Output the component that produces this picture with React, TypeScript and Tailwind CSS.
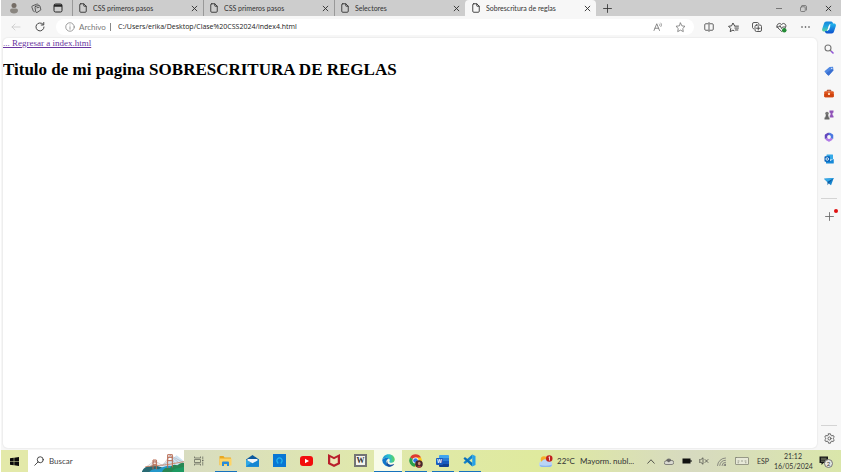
import React from "react";

type IconProps = { className?: string };

const line = {
  fill: "none",
  stroke: "currentColor",
  strokeLinecap: "round" as const,
  strokeLinejoin: "round" as const,
};

function PageIcon({ className = "" }: IconProps) {
  return (
    <svg viewBox="0 0 16 20" className={`h-[10px] w-2 shrink-0 ${className}`} {...line} strokeWidth="1.8">
      <path d="M3.5 1.5h6L14.500 6.500v10a2 2 0 0 1-2 2h-9a2 2 0 0 1-2-2v-13a2 2 0 0 1 2-2z" />
      <path d="M9.500 1.800V5.500a1 1 0 0 0 1 1h3.800" />
    </svg>
  );
}

function CloseIcon({ className = "" }: IconProps) {
  return (
    <svg viewBox="0 0 12 12" className={`h-[7px] w-[7px] ${className}`} {...line} strokeWidth="1.6">
      <path d="M2 2l8 8M10 2l-8 8" />
    </svg>
  );
}

function PlusIcon({ className = "" }: IconProps) {
  return (
    <svg viewBox="0 0 16 16" className={`h-[9px] w-[9px] ${className}`} {...line} strokeWidth="1.5">
      <path d="M8 1v14M1 8h14" />
    </svg>
  );
}

function ProfileIcon() {
  return (
    <svg viewBox="0 0 20 24" className="h-3 w-[10px]">
      <circle cx="10" cy="7" r="5" fill="#756d66" />
      <path d="M2 17a4 4 0 0 1 4-4h8a4 4 0 0 1 4 4c0 4-3.500 6-8 6s-8-2-8-6z" fill="#8a8680" />
    </svg>
  );
}

function WorkspacesIcon() {
  return (
    <svg viewBox="0 0 22 22" className="h-[11px] w-[11px]" {...line} strokeWidth="1.500">
      <path d="M9.500 6.500l6-1.500a2 2 0 0 1 2.500 1.500l1.500 6a2 2 0 0 1-1.500 2.500l-6 4a2 2 0 0 1-2.500-1.500L8 9a2 2 0 0 1 1.500-2.500z" />
      <path d="M6.500 17.500A3 3 0 0 1 4.500 16L2 9a2.500 2.500 0 0 1 1.500-3.500L11 2.500a3 3 0 0 1 3.500.5" />
      <path d="M12 9.500l4-1" />
    </svg>
  );
}

function TabActionsIcon() {
  return (
    <svg viewBox="0 0 20 20" className="h-[10px] w-[10px] text-[#262626]">
      <rect x="2" y="2" width="16" height="16" rx="3" fill="none" stroke="currentColor" strokeWidth="2" />
      <path d="M2 3h16v4.500H2z" fill="currentColor" />
    </svg>
  );
}

function StarIcon() {
  return (
    <svg viewBox="0 0 20 20" className="h-[11px] w-[11px]" {...line} strokeWidth="1.500">
      <path d="M10 1.800l2.500 5.200 5.700.8-4.100 4 1 5.700-5.100-2.700-5.100 2.700 1-5.700-4.100-4 5.700-.8z" />
    </svg>
  );
}

function ReadAloudIcon() {
  return (
    <svg viewBox="0 0 22 20" className="h-[10px] w-[11px]" {...line} strokeWidth="1.700">
      <path d="M2 17L7.500 3.500 13 17M4 12.500h7" />
      <path d="M13 4c1.200 1 1.200 2.500 0 3.500M15.500 2c2.200 2 2.200 5.500 0 7.500" strokeWidth="1.300" />
    </svg>
  );
}

function SplitIcon() {
  return (
    <svg viewBox="0 0 20 20" className="h-[10px] w-[10px]" {...line} strokeWidth="1.600">
      <path d="M8 3.500H3.500a2 2 0 0 0-2 2v9a2 2 0 0 0 2 2H8M12 3.500h4.500a2 2 0 0 1 2 2v9a2 2 0 0 1-2 2H12M10 1v18" />
    </svg>
  );
}

function FavoritesIcon() {
  return (
    <svg viewBox="0 0 20 20" className="h-[11px] w-[11px]" {...line} strokeWidth="1.700">
      <path d="M12 7L9 1.800 6.500 7 1 7.800l4 4-1 5.700 5-2.700 2 1M12.500 7.500H19M12.500 11H19M13.500 14.500H18" />
    </svg>
  );
}

function CollectionsIcon() {
  return (
    <svg viewBox="0 0 20 20" className="h-[10px] w-[10px]" {...line} strokeWidth="1.700">
      <rect x="6" y="6" width="13" height="13" rx="3" />
      <path d="M3 13.500A3 3 0 0 1 1 11V4a3 3 0 0 1 3-3h7a3 3 0 0 1 2.500 2M12.500 9v7M9 12.500h7" />
    </svg>
  );
}

function EssentialsIcon() {
  return (
    <svg viewBox="0 0 22 22" className="h-[11px] w-[11px]">
      <g {...line} strokeWidth="1.700">
        <path d="M11 18.500L3 11A5 5 0 0 1 10 4l1 1 1-1a5 5 0 0 1 7 7z" />
        <path d="M1 10h5l2-3 3 6 2-3h5" />
      </g>
      <circle cx="16.500" cy="16.500" r="4.500" fill="#258b37" />
    </svg>
  );
}

function DotsIcon() {
  return (
    <svg viewBox="0 0 18 4" className="h-[2px] w-[9px]" fill="currentColor">
      <circle cx="2" cy="2" r="1.600" />
      <circle cx="9" cy="2" r="1.600" />
      <circle cx="16" cy="2" r="1.600" />
    </svg>
  );
}

function CopilotIcon() {
  return (
    <svg viewBox="0 0 28 26" className="h-[13px] w-[14px]">
      <defs>
        <linearGradient id="cpA" x1="0" y1="0" x2="0" y2="1">
          <stop offset="0" stopColor="#1684dc" />
          <stop offset=".5" stopColor="#20a8e0" />
          <stop offset="1" stopColor="#5fd09a" />
        </linearGradient>
        <linearGradient id="cpB" x1="0" y1="0" x2="0" y2="1">
          <stop offset="0" stopColor="#23b8ee" />
          <stop offset="1" stopColor="#0b4fcc" />
        </linearGradient>
      </defs>
      <path d="M9 1h9c3 0 3.500 2 4.500 5h-5c-2 0-3 1-3.600 3l-3 9c-.8 2-1.600 3-3.900 3H4c-3 0-4.500-2-3.500-5.500L4 5c.8-2.500 2-4 5-4z" fill="url(#cpA)" />
      <path d="M19 25h-9c-3 0-3.500-2-4.500-5h4c2 0 3-1 3.600-3l3-9c.8-2 1.600-3 3.900-3h4c3 0 4.500 2 3.500 5.500L24 21c-.8 2.500-2 4-5 4z" fill="url(#cpB)" />
      <path d="M14 9h3l-3 9h-3z" fill="#f2fbff" />
    </svg>
  );
}

function SideSearchIcon() {
  return (
    <svg viewBox="0 0 20 20" className="h-[10px] w-[10px]" fill="none" strokeLinecap="round">
      <circle cx="8" cy="8" r="6" stroke="#777" strokeWidth="2.200" />
      <path d="M12.500 12.500l2 2" stroke="#777" strokeWidth="2.200" />
      <path d="M15 15l3 3" stroke="#9254d8" strokeWidth="3.200" />
    </svg>
  );
}

function TagIcon() {
  return (
    <svg viewBox="0 0 20 20" className="h-[10px] w-[10px]">
      <path d="M11 2l7-.5 1 7L10 18.500a1.500 1.500 0 0 1-2 0L1.500 12a1.500 1.500 0 0 1 0-2z" fill="#4f88e2" />
      <path d="M19 8.500L10 18.500a1.500 1.500 0 0 1-2 0L4 14.500 16 6z" fill="#3a6fd0" />
      <circle cx="15.500" cy="5" r="1.300" fill="#dbe8ff" />
    </svg>
  );
}

function ToolboxIcon() {
  return (
    <svg viewBox="0 0 20 18" className="h-[9px] w-[10px]">
      <path d="M6.500 5V2.500h7V5" fill="none" stroke="#9a3412" strokeWidth="2" />
      <rect x="0.500" y="4.500" width="19" height="12" rx="2" fill="#e0561f" />
      <path d="M.5 9.500h19v5a2 2 0 0 1-2 2h-15a2 2 0 0 1-2-2z" fill="#cf440f" />
      <rect x="8" y="7.500" width="4" height="4.500" rx="1" fill="#ffd9b8" />
    </svg>
  );
}

function GamesIcon() {
  return (
    <svg viewBox="0 0 20 20" className="h-[10px] w-[10px]">
      <circle cx="6" cy="7" r="3.500" fill="#777" />
      <path d="M4 9h4l1.500 6H11v4H1v-4h1.500z" fill="#666" />
      <path d="M11 1h8v4l-2 1v4l2 2v3h-6.500L11 12l2-2V6l-2-1z" fill="#9053b8" />
    </svg>
  );
}

function M365Icon() {
  return (
    <svg viewBox="0 0 20 20" className="h-[10px] w-[10px]" fill="none" strokeWidth="5" strokeLinejoin="round">
      <path d="M4 13.500v-7L10 3" stroke="#6146bd" />
      <path d="M10 3l6 3.500v7" stroke="#4a78e0" />
      <path d="M16 13.500L10 17l-6-3.500" stroke="#b07ae6" />
    </svg>
  );
}

function OutlookIcon() {
  return (
    <svg viewBox="0 0 20 20" className="h-[10px] w-[10px]">
      <rect x="5" y="1" width="13" height="10" rx="1" fill="#35a9e8" />
      <path d="M4 10l8 4 7.500-4v8a1 1 0 0 1-1 1H5a1 1 0 0 1-1-1z" fill="#1789d8" />
      <rect x="1" y="4.500" width="11" height="11" rx="1.500" fill="#0763ba" />
      <circle cx="6.500" cy="10" r="2.600" fill="none" stroke="#fff" strokeWidth="1.700" />
    </svg>
  );
}

function DropIcon() {
  return (
    <svg viewBox="0 0 20 18" className="h-[9px] w-[10px]">
      <path d="M0 3.500L19.500 2 14 16.500l-5-4z" fill="#1583ce" />
      <path d="M19.500 2L7 9.500v7l2.500-4z" fill="#0b5a9e" />
      <path d="M0 3.500L19.500 2 7 9.500z" fill="#34a8e6" />
    </svg>
  );
}

function GearIcon() {
  return (
    <svg viewBox="0 0 20 20" className="h-[11px] w-[11px]" {...line} strokeWidth="1.600">
      <path d="M8.200 1.500h3.600l.6 2.600 1.900 1.100 2.500-.8 1.800 3.200-1.900 1.800v1.200l1.900 1.800-1.800 3.200-2.500-.8-1.900 1.100-.6 2.600H8.200l-.6-2.600-1.900-1.100-2.500.8-1.800-3.200 1.900-1.800V9.400L1.400 7.600l1.800-3.200 2.500.8 1.900-1.100z" />
      <circle cx="10" cy="10" r="2.800" />
    </svg>
  );
}

function WindowsIcon() {
  return (
    <svg viewBox="0 0 18 18" className="h-[9px] w-[9px]" fill="#0b0b0b">
      <path d="M0 2.500L7.500 1.500v7H0zM8.500 1.300L18 0v8.500H8.500zM0 9.500h7.500v7L0 15.500zM8.500 9.500H18V18l-9.500-1.300z" />
    </svg>
  );
}

function BridgeArt() {
  return (
    <svg viewBox="0 0 126 54" className="h-[18px] w-[42px] shrink-0 self-end">
      <path d="M48 36Q62 30 74 25Q92 14 104 4L126 22v16H48z" fill="#cfe4f3" />
      <path d="M0 52Q8 36 24 37Q36 30 48 37L66 42v12H0z" fill="#286a73" />
      <path d="M22 54Q30 42 50 46Q70 32 92 36L126 42v12z" fill="#2498cb" />
      <path d="M60 54Q66 38 84 42Q92 28 106 34Q116 24 126 27v27z" fill="#288653" />
      <path d="M88 54Q96 42 112 42L126 38v16z" fill="#1d9a62" />
      <path d="M10 38L76 32L126 23" stroke="#d3805b" strokeWidth="2.500" fill="none" />
      <path d="M14 38L38 20L62 35L84 4L124 25M38 20L26 36M38 20L50 35M84 4L70 32M84 4L98 28M84 4L110 26" stroke="#a08a90" strokeWidth="1.200" fill="none" />
      <path d="M33 46V18h10v28M33 24h10M33 31h10M77 42V2h14v38M77 10h14M77 20h14" stroke="#b86950" strokeWidth="3" fill="none" />
    </svg>
  );
}

function TaskViewIcon() {
  return (
    <svg viewBox="0 0 20 20" className="h-[10px] w-[10px]" fill="none" stroke="#63665a" strokeWidth="1.500">
      <path d="M1 1v3h12V1M1 19v-3h12v3M1 7h12v6H1zM17.500 1v5M17.500 11v8" />
      <path d="M16 8.500h3" strokeWidth="2.500" />
    </svg>
  );
}

function ExplorerIcon() {
  return (
    <svg viewBox="0 0 26 24" className="h-3 w-[13px]">
      <path d="M1 3a1 1 0 0 1 1-1h7l2 3h12a1 1 0 0 1 1 1v14H1z" fill="#e9a820" />
      <path d="M1 7h24v13a1 1 0 0 1-1 1H2a1 1 0 0 1-1-1z" fill="#fdd466" />
      <path d="M6 22v-7a2 2 0 0 1 2-2h10a2 2 0 0 1 2 2v7h-4v-4h-6v4z" fill="#2b8cdb" />
    </svg>
  );
}

function MailIcon() {
  return (
    <svg viewBox="0 0 26 24" className="h-3 w-[13px]">
      <path d="M0 9L13 0l13 9v14H0z" fill="#0c5a9e" />
      <path d="M0 9l13 7.500L26 9v13a1.500 1.500 0 0 1-1.500 1.500h-23A1.500 1.500 0 0 1 0 22z" fill="#2fa7e4" />
      <path d="M0 23L13 13.500 26 9v13a1.500 1.500 0 0 1-1.500 1.500h-23z" fill="#1686d2" />
      <path d="M3 8h20v3L13 16.500 3 11z" fill="#f2f6fa" />
    </svg>
  );
}

function BlueAppIcon() {
  return (
    <svg viewBox="0 0 26 26" className="h-[13px] w-[13px]">
      <path d="M0 0h26v26H0z" fill="#0877d4" />
      <path d="M10 17.500A5.300 5.300 0 1 1 16 17.500" fill="none" stroke="#23b5ee" strokeWidth="2.500" />
      <path d="M8 18h3M15 18h3" stroke="#23b5ee" strokeWidth="2" />
    </svg>
  );
}

function YoutubeIcon() {
  return (
    <svg viewBox="0 0 26 20" className="h-[10px] w-[13px]">
      <rect width="26" height="20" rx="6" fill="#f20d0d" />
      <path d="M10 5.500l8 4.500-8 4.500z" fill="#fff" />
    </svg>
  );
}

function McAfeeIcon() {
  return (
    <svg viewBox="0 0 24 26" className="h-[13px] w-3">
      <path d="M0 0l12 6 12-6v20l-12 6-12-6z" fill="#b9202c" />
      <path d="M4.500 6.500L12 10.500l7.500-4v10.800L12 21l-7.500-3.700z" fill="#ece8b8" />
    </svg>
  );
}

function WikiIcon() {
  return (
    <span className="flex h-[13px] w-[13px] items-center justify-center border-2 border-[#747474] bg-[#f4f4f0] font-['Liberation_Serif',serif] text-[8px] leading-none font-bold text-[#333]">
      W
    </span>
  );
}

function EdgeIcon() {
  return (
    <svg viewBox="0 0 26 26" className="h-[13px] w-[13px]">
      <defs>
        <linearGradient id="edgeTop" x1="0" y1="0.500" x2="1" y2="0.400">
          <stop offset="0" stopColor="#1c8fd6" />
          <stop offset=".55" stopColor="#2cbfd0" />
          <stop offset="1" stopColor="#62d553" />
        </linearGradient>
      </defs>
      <path d="M.5 12C1.500 5 6.500.5 13 .5c7.500 0 12.500 5 12.500 10.500 0 4-3 6.500-6.500 6.500-3 0-4.500-1-4.500-2 0-.8 1-1.200 1-3C15.500 9.500 12.500 7.500 9 7.500 5 7.500 2 9.500.5 12z" fill="url(#edgeTop)" />
      <path d="M.5 12C2 9.500 5 7.500 9 7.500c2 0 4 .6 5.200 1.800C11 9.500 8.500 12 8.500 15.500c0 5 4.500 9.500 10.500 8A12.500 12.500 0 0 1 .5 12z" fill="#1277cb" />
      <path d="M11 13c-1.500 4 1.500 8.500 7 8.500 2 0 4-.5 5.500-1.500.5-.3 1 .1.700.6-2 3-6.200 5.400-10.200 4.900C9 24.500 7 18 11 13z" fill="#174f9c" />
    </svg>
  );
}

function ChromeIcon() {
  return (
    <svg viewBox="0 0 28 28" className="h-[14px] w-[14px]">
      <path d="M13 13L2.200 6.800A12.500 12.500 0 0 1 24 7z" fill="#df3b30" />
      <path d="M13 13L2.200 6.800A12.500 12.500 0 0 0 11.500 25.500L17 16z" fill="#2ba24c" />
      <path d="M13 13h4l-5.500 12.500A12.500 12.500 0 0 0 24 7H13z" fill="#fbc51b" />
      <circle cx="13" cy="13" r="6" fill="#fff" />
      <circle cx="13" cy="13" r="4.600" fill="#2f78e3" />
      <circle cx="20" cy="20" r="7.500" fill="#48252a" />
      <ellipse cx="20.500" cy="19" rx="2.700" ry="3.500" fill="#c98b72" />
      <path d="M16 26q4-5 9 0l-4 1.500z" fill="#b04040" />
    </svg>
  );
}

function WordIcon() {
  return (
    <span className="relative block h-3 w-[13px]">
      <span className="ml-[3px] flex h-full w-[10px] flex-col overflow-hidden rounded-[1px]">
        <span className="flex-1 bg-[#41a5ee]" />
        <span className="flex-1 bg-[#2b7cd3]" />
        <span className="flex-1 bg-[#185abd]" />
        <span className="flex-1 bg-[#103f91]" />
      </span>
      <span className="absolute top-[3px] left-0 flex h-[7px] w-[7px] items-center justify-center rounded-[1px] bg-[#185abd] font-['Open_Sans',sans-serif] text-[5px] leading-none font-bold text-white">
        W
      </span>
    </span>
  );
}

function CodeIcon() {
  return (
    <svg viewBox="0 0 26 26" className="h-[13px] w-[13px]">
      <path d="M18.500 1L1 16.500l1.500 2.500 2 .5L19 8z" fill="#1382cb" />
      <path d="M18.500 25L1 9.500 2.500 7l2-.5L19 18z" fill="#0a70b8" />
      <path d="M18.500 1L25 4v18l-6.500 3z" fill="#25a0e8" />
    </svg>
  );
}

function WeatherIcon() {
  return (
    <svg viewBox="0 0 28 26" className="h-[13px] w-[14px] shrink-0">
      <circle cx="10" cy="9" r="6.500" fill="#f6ad2a" />
      <path d="M6 24a5.500 5.500 0 0 1-.5-11A7 7 0 0 1 18 12a6 6 0 0 1 4 12z" fill="#b9d4f5" />
      <path d="M6 24a5 5 0 0 1-4.500-4C8 22 18 22 26 19.500A5.500 5.500 0 0 1 22 24z" fill="#8db6ec" />
      <circle cx="20.500" cy="7" r="6.500" fill="#c1211f" />
      <path d="M19 4.500l2-1V11" stroke="#fff" strokeWidth="1.600" fill="none" />
    </svg>
  );
}

const tabs = [
  { title: "CSS primeros pasos", active: false },
  { title: "CSS primeros pasos", active: false },
  { title: "Selectores", active: false },
  { title: "Sobrescritura de reglas", active: true },
];

const sideApps = [
  { name: "Buscar", icon: <SideSearchIcon /> },
  { name: "Compras", icon: <TagIcon /> },
  { name: "Herramientas", icon: <ToolboxIcon /> },
  { name: "Juegos", icon: <GamesIcon /> },
  { name: "Microsoft 365", icon: <M365Icon /> },
  { name: "Outlook", icon: <OutlookIcon /> },
  { name: "Drop", icon: <DropIcon /> },
];

const taskApps = [
  { name: "Vista de tareas", icon: <TaskViewIcon />, state: "closed" },
  { name: "Explorador de archivos", icon: <ExplorerIcon />, state: "open" },
  { name: "Correo", icon: <MailIcon />, state: "closed" },
  { name: "Alexa", icon: <BlueAppIcon />, state: "closed" },
  { name: "YouTube", icon: <YoutubeIcon />, state: "closed" },
  { name: "McAfee", icon: <McAfeeIcon />, state: "closed" },
  { name: "Wikipedia", icon: <WikiIcon />, state: "closed" },
  { name: "Microsoft Edge", icon: <EdgeIcon />, state: "focused" },
  { name: "Google Chrome", icon: <ChromeIcon />, state: "open" },
  { name: "Word", icon: <WordIcon />, state: "open" },
  { name: "Visual Studio Code", icon: <CodeIcon />, state: "open" },
];

function TabStrip() {
  const cell = "flex w-[22px] items-center justify-center";
  return (
    <header className="flex h-4 shrink-0 items-stretch bg-[#cdcdcd] text-[#333]">
      <div className="flex w-[71px] shrink-0 pl-[2px]">
        <button aria-label="Perfil" className={cell}><ProfileIcon /></button>
        <button aria-label="Áreas de trabajo" className={cell}><WorkspacesIcon /></button>
        <button aria-label="Acciones de pestaña" className={cell}><TabActionsIcon /></button>
      </div>
      {tabs.map((tab, i) => (
        <div
          key={i}
          className={
            tab.active
              ? "flex w-[131px] items-center rounded-t-[4px] bg-[#f7f7f7] pr-[5px] pl-[7px]"
              : "flex w-[131px] items-center border-l border-[#999] pr-[5px] pl-[6px]"
          }
        >
          <PageIcon />
          <button className="ml-[6px] flex-1 truncate text-left text-[7px] leading-4">{tab.title}</button>
          <button aria-label="Cerrar pestaña"><CloseIcon /></button>
        </div>
      ))}
      <button aria-label="Nueva pestaña" className="ml-[7px]"><PlusIcon /></button>
      <div className="ml-auto flex">
        <button aria-label="Minimizar" className="flex w-[25px] items-center justify-center">
          <span className="h-px w-[6px] bg-[#777]" />
        </button>
        <button aria-label="Restaurar" className="flex w-[25px] items-center justify-center">
          <svg viewBox="0 0 14 14" className="h-[7px] w-[7px] text-[#666]" {...line} strokeWidth="1.500">
            <rect x="1" y="3.500" width="9.500" height="9.500" rx="2" />
            <path d="M4 1h6a3 3 0 0 1 3 3v6" />
          </svg>
        </button>
        <button aria-label="Cerrar" className="flex w-[25px] items-center justify-center">
          <CloseIcon />
        </button>
      </div>
    </header>
  );
}

function Toolbar() {
  const cell = "flex w-6 items-center justify-center";
  return (
    <div className="flex h-[22px] shrink-0 items-stretch bg-[#f7f7f7] text-[#3d3d3d]">
      <button aria-label="Atrás" className="ml-[3px] flex w-6 items-center justify-center text-[#c8c8c8]">
        <svg viewBox="0 0 20 16" className="h-2 w-[10px]" {...line} strokeWidth="1.600">
          <path d="M18 8H2M8 2L2 8l6 6" />
        </svg>
      </button>
      <button aria-label="Actualizar" className={cell}>
        <svg viewBox="0 0 20 20" className="h-[10px] w-[10px]" {...line} strokeWidth="1.900">
          <path d="M18 10a8 8 0 1 1-2.500-6M17.500 1v5h-5" />
        </svg>
      </button>
      <div className="my-[3px] ml-1 flex flex-1 items-center rounded-full bg-white pr-2 pl-[9px] text-[8px]">
        <svg viewBox="0 0 20 20" className="h-[10px] w-[10px] text-[#777]" {...line} strokeWidth="1.400">
          <circle cx="10" cy="10" r="8.500" />
          <path d="M10 9.500v5M10 5.800v.2" />
        </svg>
        <label htmlFor="url" className="ml-1 w-[27px] text-[#777]">Archivo</label>
        <span className="mx-1 h-2 w-px bg-[#888]" />
        <input
          id="url"
          className="ml-[3px] h-4 flex-1 bg-transparent pb-px font-['Open_Sans',sans-serif] text-[7px] text-[#222] outline-none"
          defaultValue="C:/Users/erika/Desktop/Clase%20CSS2024/index4.html"
        />
        <button aria-label="Leer en voz alta" className="mr-[11px] text-[#777]"><ReadAloudIcon /></button>
        <button aria-label="Agregar a favoritos" className="text-[#777]"><StarIcon /></button>
      </div>
      <div className="ml-[3px] flex">
        <button aria-label="Pantalla dividida" className={cell}><SplitIcon /></button>
        <button aria-label="Favoritos" className={cell}><FavoritesIcon /></button>
        <button aria-label="Colecciones" className={cell}><CollectionsIcon /></button>
        <button aria-label="Rendimiento" className={cell}><EssentialsIcon /></button>
        <button aria-label="Configuración y más" className={cell}><DotsIcon /></button>
        <button aria-label="Copilot" className={cell}><CopilotIcon /></button>
      </div>
    </div>
  );
}

function Sidebar() {
  return (
    <aside className="flex w-6 shrink-0 flex-col items-center text-[#555]">
      {sideApps.map((app) => (
        <button key={app.name} aria-label={app.name} className="flex h-[22px] w-full items-center justify-center">
          {app.icon}
        </button>
      ))}
      <span className="mt-[6px] h-px w-4 bg-[#d4d4d4]" />
      <button aria-label="Personalizar" className="relative mt-[6px] flex h-[22px] w-full items-center justify-center">
        <PlusIcon className="text-[#666]" />
        <span className="absolute top-1 right-[3px] h-1 w-1 rounded-full bg-[#e01010]" />
      </button>
      <span className="mt-auto h-px w-4 bg-[#d4d4d4]" />
      <button aria-label="Configuración" className="flex h-6 w-full items-center justify-center"><GearIcon /></button>
    </aside>
  );
}

function Taskbar() {
  return (
    <footer className="flex h-[22px] shrink-0 items-stretch bg-[#e3e9a9] text-[#222]">
      <button aria-label="Inicio" className="flex w-[27px] items-center justify-center"><WindowsIcon /></button>
      <div className="flex w-[156px] items-center bg-white pl-[6px]">
        <svg viewBox="0 0 20 20" className="h-[10px] w-[10px]" {...line} strokeWidth="1.600">
          <circle cx="12.500" cy="7.500" r="6" />
          <path d="M8 12l-6.500 6.500" />
        </svg>
        <input
          aria-label="Buscar"
          placeholder="Buscar"
          className="ml-[5px] h-4 w-0 flex-1 bg-transparent pb-px text-[8px] outline-none placeholder:text-[#444]"
        />
        <BridgeArt />
      </div>
      <nav className="flex flex-1 bg-linear-to-r from-[#d8dcc0] via-[#e0e8ac] to-[#dfea9e] pl-px">
        {taskApps.map((app) => (
          <button
            key={app.name}
            aria-label={app.name}
            className={
              app.state === "focused"
                ? "flex w-7 flex-col items-center bg-[#f8fbe9]"
                : "flex w-[27px] flex-col items-center"
            }
          >
            <span className="flex flex-1 items-center">{app.icon}</span>
            {app.state === "closed" && <span className="h-px" />}
            {app.state === "open" && <span className="h-px w-[22px] bg-[#1672bd]" />}
            {app.state === "focused" && <span className="h-px w-full bg-[#1672bd]" />}
          </button>
        ))}
      </nav>
      <div className="flex items-center bg-linear-to-r from-[#dfea9e] via-[#d7dac0] to-[#dae6aa] text-[8px] text-[#333]">
        <button className="flex w-[107px] items-center">
          <WeatherIcon />
          <span className="ml-1">22°C</span>
          <span className="ml-[5px] truncate">Mayorm. nubl...</span>
        </button>
        <button aria-label="Mostrar iconos ocultos" className="ml-px">
          <svg viewBox="0 0 16 10" className="h-[5px] w-2" {...line} strokeWidth="1.600">
            <path d="M1.500 8.500L8 1.500l6.500 7" />
          </svg>
        </button>
        <svg viewBox="0 0 20 14" className="ml-[9px] h-[7px] w-[10px]">
          <path d="M4 13a3.500 3.500 0 0 1 0-7 6 6 0 0 1 11-1 4 4 0 0 1 1 8z" fill="#d9d9d0" stroke="#666" strokeWidth="1.500" />
          <path d="M4 6a6 6 0 0 1 11-1c-1 1-4 2-5 4C8 7 6 6 4 6z" fill="#666" />
        </svg>
        <svg viewBox="0 0 20 12" className="ml-2 h-[6px] w-[10px]">
          <rect x="1" y="1" width="16" height="10" fill="#111" />
          <rect x="17" y="4" width="2" height="4" fill="#111" />
        </svg>
        <svg viewBox="0 0 20 16" className="ml-[7px] h-2 w-[10px]" {...line} strokeWidth="1.300">
          <path d="M1 5.500h2.500L8 1.500v13l-4.500-4H1zM12 5l6 6M18 5l-6 6" />
        </svg>
        <svg viewBox="0 0 20 18" className="ml-2 h-[9px] w-[10px] text-[#666]" {...line} strokeWidth="1.400">
          <path d="M1 17A16 16 0 0 1 17 2M5.500 17A12 12 0 0 1 17 6.500M10 17a7 7 0 0 1 7-6.500M14 17a3 3 0 0 1 3-3v3z" />
        </svg>
        <svg viewBox="0 0 28 16" className="ml-2 h-2 w-[14px] text-[#77796c]" {...line} strokeWidth="1.400">
          <rect x="1" y="1" width="26" height="14" rx="1" fill="#e7e9d8" />
          <path d="M6 8h2M13 8h2M20 8h2M6 11.500h1M21 11.500h1" />
        </svg>
        <span className="ml-2 w-3 text-[7px]">ESP</span>
        <time className="ml-[5px] flex w-[38px] flex-col text-center text-[7px] leading-[10px]">
          <span>21:12</span>
          <span>16/05/2024</span>
        </time>
        <button aria-label="Notificaciones" className="relative mr-2 ml-[7px] h-[14px] w-[14px]">
          <svg viewBox="0 0 20 20" className="h-[10px] w-[10px]">
            <path d="M1 1h17v13H9l-4 4v-4H1z" fill="#161616" />
            <path d="M4 4.500h11M4 7.500h11M4 10.500h7" stroke="#c9d2a8" strokeWidth="1" />
          </svg>
          <span className="absolute right-0 bottom-0 flex h-[9px] w-[9px] items-center justify-center rounded-full border border-[#777] bg-[#e6e6e0] text-[6px] leading-none">
            2
          </span>
        </button>
      </div>
    </footer>
  );
}

export default function App() {
  return (
    <div className="flex h-screen flex-col bg-white px-px font-['Lato','Open_Sans',sans-serif]">
      <TabStrip />
      <Toolbar />
      <div className="flex min-h-0 flex-1 bg-[#f7f7f7] pl-[2px]">
        <main className="mb-[2px] flex-1 overflow-hidden rounded-[5px] bg-white font-['Liberation_Serif',serif] text-black shadow-[0_0_1px_1px_#ededed]">
          <a href="#index" className="block text-[9px] leading-[10px] text-[#6a35a0] underline">
            ... Regresar a index.html
          </a>
          <h1 className="mt-3 text-[17px] leading-5 font-bold">Titulo de mi pagina SOBRESCRITURA DE REGLAS</h1>
        </main>
        <Sidebar />
      </div>
      <Taskbar />
    </div>
  );
}
